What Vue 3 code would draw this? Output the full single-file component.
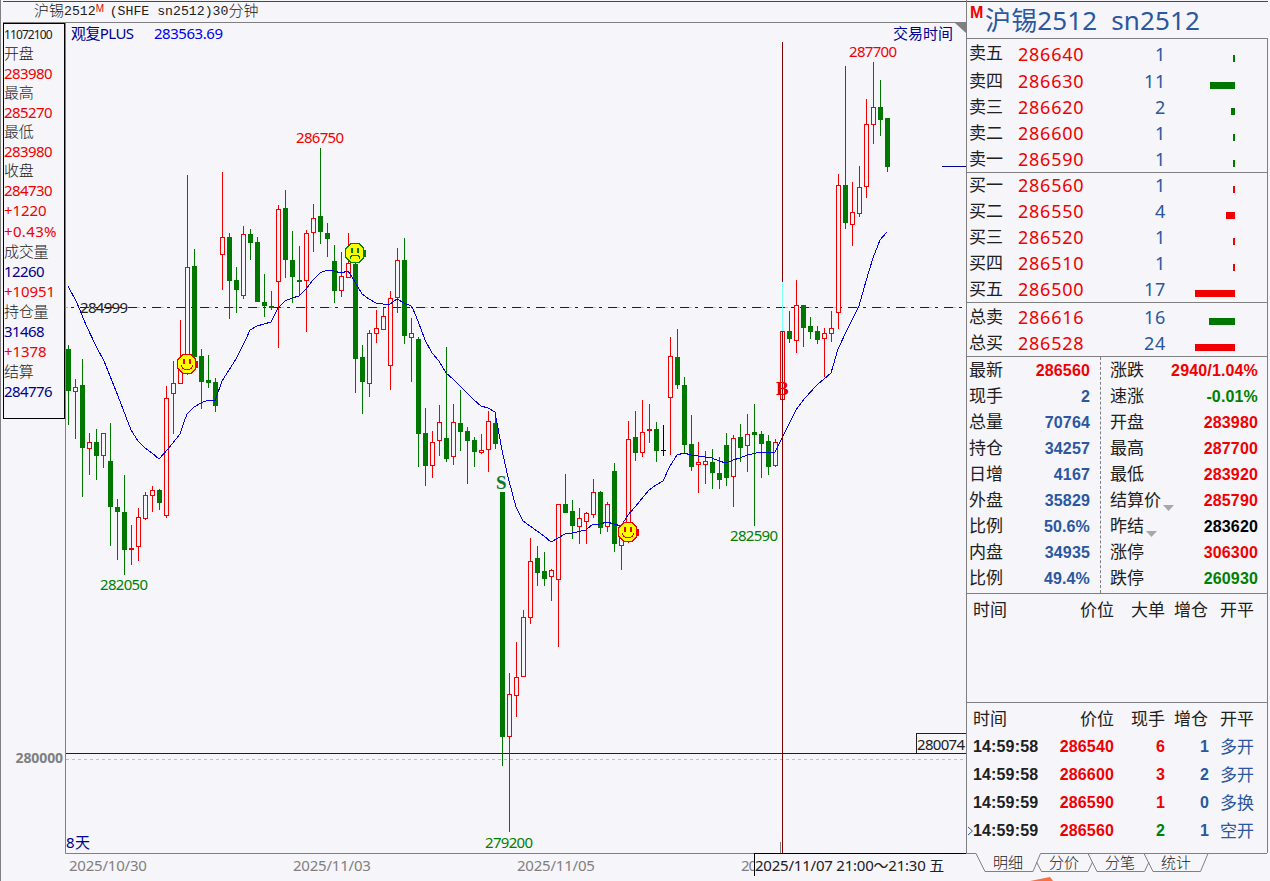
<template>
  <div class="ventana">
    <section class="grafico">
      <header class="titulo">
        <span class="cjk">沪锡</span><span>2512</span><sup>M</sup><span class="codigo">(SHFE sn2512)30</span><span class="cjk">分钟</span>
      </header>

      <div class="cuerpo">
        <aside class="lateral">
          <div class="datos">
            <p v-for="(d, i) in datos" :key="i" :class="d[1]" :style="{ height: d[2] + 'px' }">{{ d[0] }}</p>
          </div>
          <b class="escala">280000</b>
        </aside>

        <svg class="velas" width="901" height="831" viewBox="65 23 901 831">
          <path d="M65.5 23V853.5H966" class="marco" />
          <path d="M955 23H966V33Z" fill="#808080" />
          <path d="M66 759.5H966" stroke="#c0c0c0" stroke-dasharray="3 3" />
          <path d="M66 307.5H966" stroke="#c0c0c0" stroke-dasharray="12 3 3 6" stroke-dashoffset="10" />
          <path d="M66 307.5H966" stroke="#202020" stroke-dasharray="9 6 3 6" stroke-dashoffset="10" />
          <path d="M66 753.5H966" stroke="#202020" />
          <path d="M780.5 842V853" stroke="#808080" />

          <g v-for="v in velas" :key="v.x" :class="v.tipo" shape-rendering="crispEdges">
            <rect :x="v.x" :y="v.alto" width="1" :height="v.bajo - v.alto" />
            <rect v-if="v.tipo === 'negra'" :x="v.x - 2" :y="v.arriba" width="5" height="1" />
            <rect v-else-if="v.tipo === 'verde'" :x="v.x - 2" :y="v.arriba" width="5" :height="v.abajo - v.arriba" />
            <rect v-else class="hueco" :x="v.x - 1.5" :y="v.arriba + 0.5" width="4" :height="v.abajo - v.arriba - 1" />
          </g>

          <polyline :points="media" class="media" shape-rendering="crispEdges" />
          <path d="M782.5 42V853" stroke="#800000" />
          <path d="M782.5 282V331" stroke="#80ffff" />
          <path d="M942 166.5H966" stroke="#000090" />

          <g v-for="c in caras" :key="c.x" :transform="`translate(${c.x} ${c.y})`" :stroke="c.color" fill="none" shape-rendering="crispEdges">
            <path d="M-4-9.5H4L8.500-5V5L4 9.500H-4L-9.500 4V-4Z" fill="#ffff00" />
            <path d="M9.500-3V4" stroke-width="2" />
            <path d="M-3-5V0M3-5V0" stroke-width="2" />
            <path :d="c.triste ? 'M-4.500 6V4L-3 2.500H3L4.500 4V6' : 'M-5.500 1.500L-4.500 4L-2 5.500H2L4.500 4L5.500 1.500'" />
          </g>

          <text v-for="t in textos" :key="t.t" :x="t.x" :y="t.y" :fill="t.c" :textLength="t.w">{{ t.t }}</text>
          <text x="496" y="489" class="senal" fill="#107830">S</text>
          <text x="776" y="395" class="senal" fill="#e00000">B</text>
          <rect x="916.5" y="733.5" width="50" height="20" fill="#f5f5fa" stroke="#202020" />
          <text x="917" y="750" fill="#202020" textLength="48">280074</text>
        </svg>
      </div>

      <footer class="fechas">
        <span>2025/10/30</span><span>2025/11/03</span><span>2025/11/05</span><span>20</span>
        <div class="cursor">2025/11/07 21:00～21:30 五</div>
      </footer>
    </section>

    <section class="panel">
      <h1><sup>M</sup>沪锡2512&nbsp; sn2512</h1>

      <div class="marco-panel">
        <div v-for="(grupo, g) in libro" :key="g" class="grupo" :class="'g' + g">
          <div v-for="f in grupo" :key="f[0]" class="orden">
            <span class="et">{{ f[0] }}</span>
            <span class="pr">{{ f[1] }}</span>
            <span class="vol">{{ f[2] }}</span>
            <i :class="f[4]" :style="{ width: f[3] + 'px' }"></i>
          </div>
        </div>

        <div class="resumen">
          <div class="col">
            <div v-for="(r, i) in izquierda" :key="i" class="fila">
              <span>{{ r[0] }}</span><b :class="r[2]">{{ r[1] }}</b>
            </div>
          </div>
          <div class="col der">
            <div v-for="r in derecha" :key="r[0]" class="fila">
              <span>{{ r[0] }}<svg v-if="r[3]" width="12" height="6"><path d="M0 0H11L5.500 6Z" fill="#a8a8a8" /></svg></span>
              <b :class="r[2]">{{ r[1] }}</b>
            </div>
          </div>
        </div>

        <div class="grandes">
          <div class="trato cabeza"><span>时间</span><span>价位</span><span>大单</span><span>增仓</span><span>开平</span></div>
        </div>

        <div class="tratos">
          <div class="trato cabeza"><span>时间</span><span>价位</span><span>现手</span><span>增仓</span><span>开平</span></div>
          <div v-for="(t, i) in tratos" :key="i" class="trato dato">
            <b>{{ t[0] }}</b><b class="rojo">{{ t[1] }}</b><b :class="t[5]">{{ t[2] }}</b><b class="azul">{{ t[3] }}</b><span class="azul">{{ t[4] }}</span>
            <svg v-if="i === 3" class="marca" width="7" height="10"><path d="M1 1L5.500 5L1 9" fill="none" stroke="#2a5caa" /></svg>
          </div>
        </div>
      </div>

      <nav class="pestanas">
        <svg width="304" height="28" viewBox="966 853 304 28">
          <path d="M966 853.5H976L985 871.500H1033L1040.500 853.500H1267M1036.500 862L1041.500 871.500H1088L1092.500 862M1088 853.500L1097 871.500H1144.500L1149 862M1144 853.500L1153 871.500H1200.500L1208 853.500" fill="none" stroke="#808080" />
          <path d="M1030 881L1050 877L1053 881Z" fill="#f87040" />
        </svg>
        <div class="nombres">
          <span>明细</span><span>分价</span><span>分笔</span><span>统计</span>
        </div>
      </nav>
    </section>
  </div>
</template>

<script setup>
import { computed } from 'vue';

// texto, color, alto de la fila
const datos = [
  ['11072100', 'peq', 18], ['开盘', 'et', 19], ['283980', 'rojo', 20], ['最高', 'et', 19],
  ['285270', 'rojo', 20], ['最低', 'et', 19], ['283980', 'rojo', 20], ['收盘', 'et', 19],
  ['284730', 'rojo', 20], ['+1220', 'rojo signo', 21], ['+0.43%', 'rojo porc', 21], ['成交量', 'et', 19],
  ['12260', 'marino', 20], ['+10951', 'rojo signo', 21], ['持仓量', 'et', 19], ['31468', 'marino', 20],
  ['+1378', 'rojo signo', 21], ['结算', 'et', 19], ['284776', 'marino', 20],
];

// tipo, maximo, arriba, abajo, minimo
const series = `g 345 349 391 425|r 379 387 392 439|g 359 385 448 497|r 433 442 449 475|g 429 442 456 480|r 433 433 456 468
g 423 461 507 546|g 499 507 512 560|g 475 512 550 575|r 525 548 550 565|r 508 517 547 561|r 492 495 519 520
r 486 490 496 512|g 489 490 503 510|r 386 398 516 518|r 361 383 394 434|r 320 358 384 384|r 175 267 374 375
g 249 266 357 357|g 349 356 382 409|g 355 380 383 388|g 378 382 406 412|r 172 237 255 290|g 233 237 281 319
g 267 280 290 313|r 226 234 296 299|g 229 234 243 260|g 237 242 302 302|g 274 302 306 317|g 291 306 308 310
r 205 209 282 348|g 190 208 260 278|g 231 260 277 303|g 246 280 282 296|r 230 233 281 332|r 204 218 233 252
g 148 216 232 244|g 223 233 239 257|g 245 261 291 303|r 252 276 291 297|r 233 263 278 278|g 262 264 359 393
g 345 357 382 414|r 330 333 384 397|r 310 328 334 343|r 308 316 330 330|r 291 298 366 390|r 248 260 298 313
g 238 260 336 344|r 318 333 338 382|g 337 339 434 467|g 408 433 466 486|r 431 442 466 478|r 405 422 441 456
g 347 438 459 462|r 404 422 457 465|g 390 423 432 451|g 427 431 441 484|g 437 440 452 467|r 434 450 453 454
r 411 421 450 472|g 417 423 444 449|g 492 492 737 766|r 673 694 737 832|r 642 677 696 717|r 610 617 677 677
r 538 561 618 624|g 546 558 573 586|g 552 571 579 586|r 569 570 577 601|r 504 504 580 647|g 474 504 513 513
g 500 511 526 539|r 508 518 527 544|r 512 513 522 544|r 479 492 515 518|g 491 492 528 534|r 502 504 527 532
g 463 471 544 552|r 526 530 546 570|r 421 439 542 543|g 411 437 453 461|r 400 432 453 457|r 404 429 431 443
g 422 429 451 462|n 425 450 451 456|r 337 356 398 455|g 329 357 385 389|g 377 385 445 454|g 415 444 467 471
r 442 462 465 493|r 451 461 465 484|g 449 462 473 489|g 457 473 480 489|g 433 445 478 486|r 435 438 477 507
g 424 437 448 462|r 414 434 446 472|g 404 432 435 526|g 431 434 444 478|g 435 441 467 475|r 439 442 466 467
r 331 331 400 400|g 311 331 339 343|r 280 305 341 353|g 305 305 328 347|g 317 326 332 339|g 326 331 340 344
r 328 333 339 377|r 311 328 334 342|r 174 185 313 329|g 66 185 223 229|r 182 212 225 246|r 166 187 214 217
r 99 124 187 198|r 62 107 125 144|g 80 107 120 136|g 118 118 167 172`;

const tipos = { g: 'verde', r: 'roja', n: 'negra' };

const velas = computed(() => {
  return series.split(/[|\n]/).map((s, i) => {
    const [t, alto, arriba, abajo, bajo] = s.split(' ');
    return { x: 68 + i * 7, tipo: tipos[t], alto: +alto, arriba: +arriba, abajo: +abajo, bajo: +bajo };
  });
});

const media = '68,286 77,303 86,325 97,348 104,361 118,396 131,430 138,441 145,448 152,453 159,459 168,449 180,434 184,422 187,414 194,407 201,403 208,400 215,401 222,381 229,370 236,359 246,339 250,330 257,326 264,324 271,322 278,308 285,301 292,298 299,296 306,289 313,280 320,273 327,270 334,271 341,273 348,271 352,277 362,294 369,299 376,303 383,304 390,304 397,299 404,303 411,306 413,309 418,321 425,340 432,353 439,361 446,373 453,379 460,386 467,393 474,400 481,406 488,408 495,412 502,450 508,477 516,507 523,521 530,526 544,536 551,542 558,538 565,534 572,533 586,530 593,524 600,524 607,522 614,524 621,526 628,515 635,507 649,490 656,485 663,481 670,466 677,455 684,453 691,455 705,457 712,458 719,461 726,463 733,460 740,458 747,455 761,452 768,453 775,452 782,438 796,410 805,398 817,385 831,373 838,349 848,328 859,306 866,281 873,258 880,240 887,232';

const caras = [
  { x: 187, y: 364, color: '#f00000' },
  { x: 355, y: 253, color: '#008000', triste: true },
  { x: 628, y: 532, color: '#f00000' },
];

const textos = [
  { t: '观复PLUS', x: 71, y: 39, w: 63, c: '#000090' },
  { t: '283563.69', x: 154, y: 39, w: 69, c: '#0000f0' },
  { t: '交易时间', x: 893, y: 39, w: 60, c: '#000090' },
  { t: '287700', x: 849, y: 57, w: 48, c: '#f00000' },
  { t: '286750', x: 296, y: 143, w: 48, c: '#f00000' },
  { t: '284999', x: 80, y: 313, w: 48, c: '#202020' },
  { t: '282050', x: 100, y: 590, w: 48, c: '#008000' },
  { t: '282590', x: 730, y: 541, w: 48, c: '#008000' },
  { t: '279200', x: 485, y: 848, w: 48, c: '#008000' },
  { t: '8天', x: 66, y: 848, w: 24, c: '#000090' },
];

const libro = [
  [
    ['卖五', 286640, 1, 2, 'v'], ['卖四', 286630, 11, 25, 'v'], ['卖三', 286620, 2, 4, 'v'],
    ['卖二', 286600, 1, 2, 'v'], ['卖一', 286590, 1, 2, 'v'],
  ],
  [
    ['买一', 286560, 1, 2, 'r'], ['买二', 286550, 4, 9, 'r'], ['买三', 286520, 1, 2, 'r'],
    ['买四', 286510, 1, 2, 'r'], ['买五', 286500, 17, 40, 'r'],
  ],
  [['总卖', 286616, 16, 26, 'v'], ['总买', 286528, 24, 40, 'r']],
];

const izquierda = [
  ['最新', '286560', 'rojo'], ['现手', '2', 'azul'], ['总量', '70764', 'azul'],
  ['持仓', '34257', 'azul'], ['日增', '4167', 'azul'], ['外盘', '35829', 'azul'],
  ['比例', '50.6%', 'azul'], ['内盘', '34935', 'azul'], ['比例', '49.4%', 'azul'],
];

const derecha = [
  ['涨跌', '2940/1.04%', 'rojo'], ['速涨', '-0.01%', 'verdoso'], ['开盘', '283980', 'rojo'],
  ['最高', '287700', 'rojo'], ['最低', '283920', 'rojo'], ['结算价', '285790', 'rojo', true],
  ['昨结', '283620', 'negro', true], ['涨停', '306300', 'rojo'], ['跌停', '260930', 'verdoso'],
];

const tratos = [
  ['14:59:58', '286540', 6, 1, '多开', 'rojo'],
  ['14:59:58', '286600', 3, 2, '多开', 'rojo'],
  ['14:59:59', '286590', 1, 0, '多换', 'rojo'],
  ['14:59:59', '286560', 2, 1, '空开', 'verdoso'],
];
</script>

<style>
body {
  margin: 0;
  background: #f5f5fa;
  overflow: hidden;
}
</style>

<style scoped>
.ventana {
  display: grid;
  grid-template-columns: 966px 304px;
  width: 1270px;
  height: 881px;
  box-sizing: border-box;
  background: linear-gradient(#f00000, #f00000) 3px 1px / 1265px 1px no-repeat, #f5f5fa;
  box-shadow: inset 1px 0 #808080;
  color: #202020;
  font: 14px/1 "Noto Sans", "Noto Sans CJK SC", sans-serif;
}

.rojo { color: #f00000; }
.azul { color: #2a579f; }
.marino { color: #000090; }
.verdoso { color: #008000; }
.negro { color: #000; }

/* Zona del grafico */
.titulo {
  display: flex;
  align-items: center;
  height: 23px;
  box-sizing: border-box;
  margin-left: 3px;
  padding: 2px 0 0 31px;
  border-bottom: 1px solid #808080;
  font: 13.200px/1 "Liberation Mono", "Noto Sans CJK SC", monospace;
}

.titulo .cjk { font-size: 15px; font-weight: 300; padding-top: 1px; }

.titulo sup {
  width: 9px;
  margin: -6px 5px 0 0;
  color: #f00000;
  font: 10px/1 "Liberation Sans", sans-serif;
}

.cuerpo {
  display: flex;
  height: 831px;
}

.lateral {
  display: flex;
  flex-direction: column;
  width: 65px;
}

.datos {
  width: 62px;
  height: 396px;
  box-sizing: border-box;
  margin-left: 3px;
  padding-top: 2px;
  border: 1px solid #000;
  white-space: nowrap;
}

.datos p {
  display: flex;
  align-items: center;
  margin: 0;
  font-size: 15px;
  letter-spacing: -0.580px;
}

.datos .signo { letter-spacing: -0.100px; }
.datos .porc { letter-spacing: 0.350px; }
.datos .et { font-size: 15px; font-weight: 300; padding-bottom: 1px; box-sizing: border-box; letter-spacing: -0.3px; }
.datos .peq { font-size: 12px; letter-spacing: -0.9px; }

.escala {
  margin-top: 332px;
  padding-right: 2px;
  text-align: right;
  color: #808080;
  font-size: 14px;
  letter-spacing: -0.1px;
}

.velas { display: block; flex: none; }
.velas text { font-size: 15px; }
.velas .senal { font: bold 19px "Liberation Serif", serif; }
.marco { fill: none; stroke: #808080; }
.roja { fill: #f00000; }
.verde { fill: #007800; }
.negra { fill: #000; }
.hueco { fill: #f5f5fa; stroke: #f00000; }
.media { fill: none; stroke: #0000e0; }

.fechas {
  position: relative;
  display: flex;
  padding-left: 69px;
  color: #808080;
  height: 27px;
  font-size: 15px;
  line-height: 23px;
}

.fechas span { width: 224px; letter-spacing: -0.220px; }
.fechas span:nth-child(4) { width: 13px; overflow: hidden; letter-spacing: -1px; }

.cursor {
  position: absolute;
  left: 754px;
  top: -1px;
  width: 211px;
  height: 22px;
  border-top: 1px solid #000;
  border-left: 1px solid #000;
  background: #f5f5fa;
  color: #202020;
  line-height: 22px;
  white-space: nowrap;
  letter-spacing: -0.220px;
}

/* Panel de cotizaciones */
h1 {
  display: flex;
  height: 38px;
  box-sizing: border-box;
  margin: 0;
  padding: 1px 0 0 3px;
  border-left: 1px solid #808080;
  color: #2a579f;
  font-size: 26px;
  font-weight: 400;
  line-height: 38px;
  letter-spacing: 0.150px;
}

h1 sup {
  width: 15px;
  padding-top: 4px;
  color: #f00000;
  font: bold 16px/1 "Liberation Sans", sans-serif;
}

.marco-panel {
  width: 302px;
  height: 815px;
  box-sizing: border-box;
  border: 1px solid #808080;
  border-bottom: 0;
  font-size: 17px;
}

.grupo { box-shadow: inset 0 1px #808080; }
.g0 { height: 133px; padding-top: 0; box-shadow: none; }
.g0 .orden:first-child { height: 29px; }
.g1 { height: 130px; }
.g2 { height: 52px; padding-top: 2px; }

.orden {
  display: grid;
  grid-template-columns: 49px 77px 71px 69px;
  align-items: center;
  height: 26px;
  padding-left: 2px;
}

.orden .et { padding-bottom: 2px; }
.pr { color: #f00000; font-size: 18px; letter-spacing: 0.750px; }
.vol { color: #2a579f; font-size: 18px; text-align: right; letter-spacing: 0.700px; }
.orden i { justify-self: end; height: 7px; margin-top: 9px; }
.orden .v { background: #007800; }
.orden .r { background: #f00000; }

.resumen {
  display: flex;
  height: 236px;
  border-top: 1px solid #808080;
}

.col { width: 133px; padding-top: 1px; border-right: 1px dashed #808080; }
.der { width: 148px; padding-left: 9px; border: 0; }

.fila {
  display: flex;
  justify-content: space-between;
  align-items: center;
  height: 26px;
  padding: 0 10px 0 2px;
}

.der .fila { padding: 0; }
.fila span { padding-bottom: 3px; }
.fila svg { margin: 0 0 -5px 2px; }

b { font-weight: bold; }

.fila b, .trato b {
  font-family: "Liberation Sans", Arial, sans-serif;
  font-size: 16px;
  letter-spacing: 0.150px;
}

.fila b { padding-bottom: 1px; }

.grandes {
  height: 108px;
  border-top: 1px solid #808080;
}

.tratos {
  border-top: 1px solid #808080;
}

.trato {
  position: relative;
  display: grid;
  grid-template-columns: 70px 71px 51px 43px 46px;
  align-items: center;
  height: 28px;
  padding-left: 6px;
}

.trato > :nth-child(n + 2) { text-align: right; }
.dato > * { margin-top: -2px; }
.dato > span { margin-top: -3px; }
.trato.cabeza { height: 31px; }
.trato .marca { position: absolute; left: 0; top: 10px; }
.trato b:nth-child(4) { margin-right: -1px; }

.pestanas {
  display: grid;
  height: 28px;
}

.pestanas > * { grid-area: 1 / 1; }

.nombres {
  display: flex;
  gap: 26px;
  padding: 2px 0 0 27px;
  font-size: 15px;
  font-weight: 300;
}
</style>
